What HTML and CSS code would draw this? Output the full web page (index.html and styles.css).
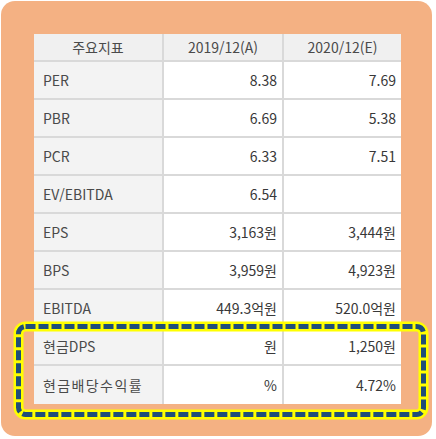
FILE: index.html
```html
<!DOCTYPE html>
<html lang="ko">
<head>
<meta charset="utf-8">
<link rel="stylesheet" href="styles.css">
</head>
<body>
<div class="frame">
  <div class="grid">
    <div class="row head"><div class="c">주요지표</div><div class="c">2019/12(A)</div><div class="c">2020/12(E)</div></div>
    <div class="row"><div class="c lbl">PER</div><div class="c num">8.38</div><div class="c num">7.69</div></div>
    <div class="row"><div class="c lbl">PBR</div><div class="c num">6.69</div><div class="c num">5.38</div></div>
    <div class="row"><div class="c lbl">PCR</div><div class="c num">6.33</div><div class="c num">7.51</div></div>
    <div class="row"><div class="c lbl">EV/EBITDA</div><div class="c num">6.54</div><div class="c num"></div></div>
    <div class="row"><div class="c lbl">EPS</div><div class="c num">3,163원</div><div class="c num">3,444원</div></div>
    <div class="row"><div class="c lbl">BPS</div><div class="c num">3,959원</div><div class="c num">4,923원</div></div>
    <div class="row"><div class="c lbl">EBITDA</div><div class="c num">449.3억원</div><div class="c num">520.0억원</div></div>
    <div class="row"><div class="c lbl">현금DPS</div><div class="c num">원</div><div class="c num">1,250원</div></div>
    <div class="row last"><div class="c lbl wide">현금배당수익률</div><div class="c num">%</div><div class="c num">4.72%</div></div>
  </div>
</div>
<svg class="mark" width="436" height="439" viewBox="0 0 436 439">
  <rect x="18.5" y="326.5" width="405" height="88" rx="7" fill="none" stroke="#ffff00" stroke-width="10"/>
  <rect x="18.5" y="326.5" width="405" height="88" rx="7" fill="none" stroke="#1f4e79" stroke-width="5" stroke-dasharray="10 3"/>
</svg>
</body>
</html>
```

FILE: styles.css
```css
html, body {
  margin: 0;
  padding: 0;
  background: #ffffff;
}
body {
  position: relative;
  width: 436px;
  height: 439px;
  font-family: "Noto Sans CJK KR", "Noto Sans", sans-serif;
  font-size: 14px;
  color: #4a4a4a;
}
.frame {
  margin: 1px 0 0 1px;
  width: 431px;
  height: 435px;
  box-sizing: border-box;
  padding: 33px 0 0 33px;
  background: #f4b183;
  border-radius: 14px;
}
.grid {
  width: 367px;
  background: #fff;
}
.row {
  display: grid;
  grid-template-columns: 130px 120px 117px;
  height: 38px;
  box-sizing: border-box;
  border-bottom: 2px solid #d9d9d9;
}
.row.last {
  border-bottom: none;
}
.row.head {
  height: 28px;
  background: #f0f0f0;
}
.c {
  display: flex;
  align-items: center;
  box-sizing: border-box;
  border-right: 2px solid #d9d9d9;
  white-space: nowrap;
}
.c:last-child {
  border-right: none;
}
.head .c {
  justify-content: center;
  color: #4a4a4a;
}
.lbl {
  background: #f3f3f3;
  padding-left: 9px;
  color: #4a4a4a;
}
.wide {
  letter-spacing: 1.4px;
}
.num {
  justify-content: flex-end;
  padding-right: 5px;
  color: #383838;
}
.mark {
  position: absolute;
  left: 0;
  top: 0;
}
```
